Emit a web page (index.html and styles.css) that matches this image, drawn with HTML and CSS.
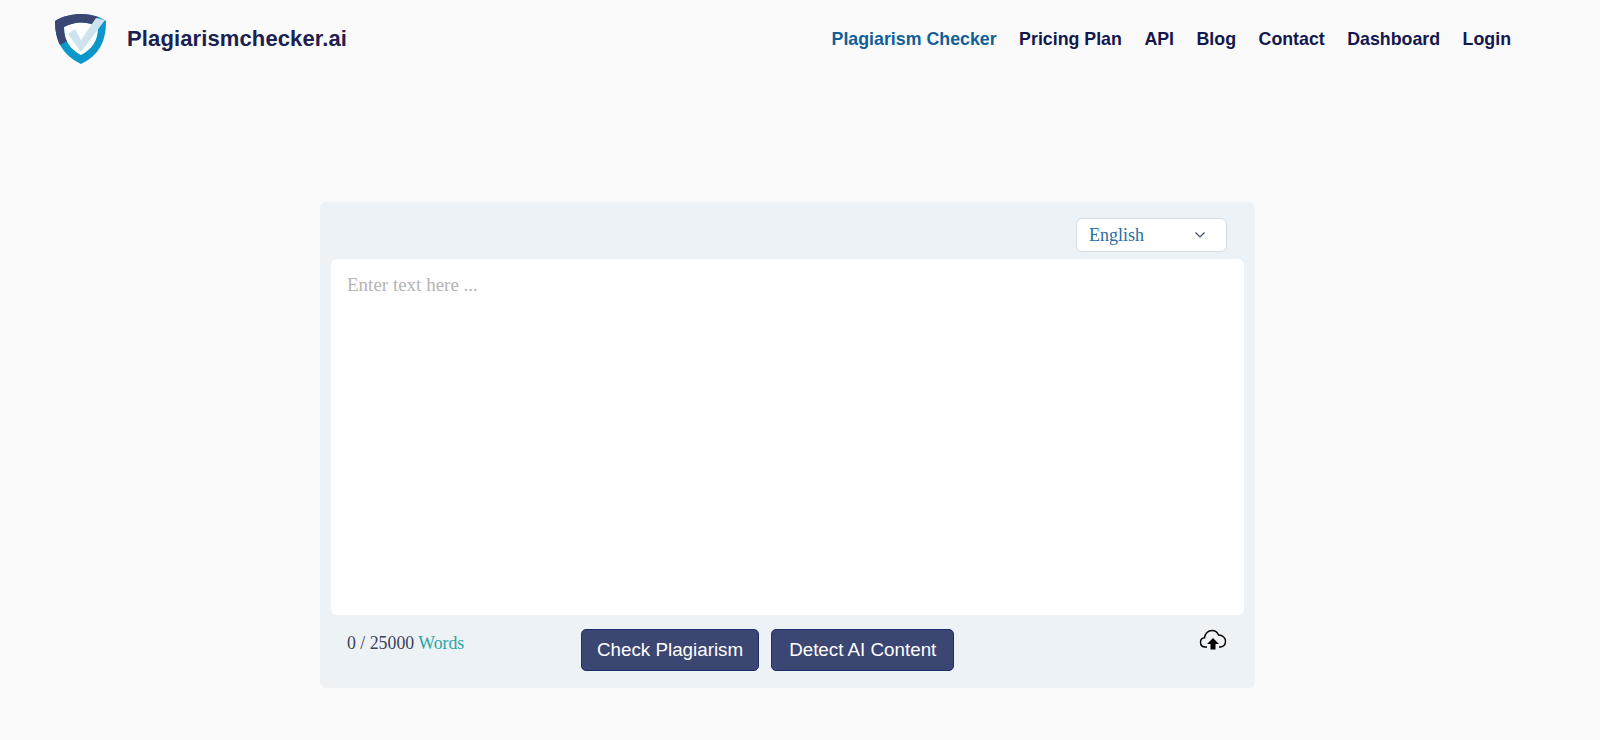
FILE: index.html
```html
<!DOCTYPE html>
<html lang="en">
<head>
  <meta charset="UTF-8">
  <title>Plagiarismchecker.ai</title>
  <link rel="stylesheet" href="styles.css">
</head>
<body>
  <header class="topbar">
    <a class="brand" href="#">
      <svg class="brand-logo" width="52" height="50" viewBox="0 0 52 50">
        <path d="M0 7C8 2 17 0 26 0C35 0 44 2 51 7C51 28 44 41 26 50C8 41 0 28 0 7Z" fill="#0b97c9"/>
        <path d="M9 13C15 10 20 8.5 26 8.5C32 8.5 37 10 43 13C43 27 37 35 26 41C15 35 9 27 9 13Z" fill="#fff"/>
        <path d="M0 7C8 2 17 0 26 0C32 0 38 1 43 3L38 10C34 9 30 8.5 26 8.5C20 8.5 15 10 9 13C9 19 10 24 12 27L5 31C2 25 0 17 0 7Z" fill="#3c4672"/>
        <path d="M13 20L20 15L26 26L41 4L50 6L26 38Z" fill="#cfe3ef"/>
      </svg>
      <span class="brand-name">Plagiarismchecker.ai</span>
    </a>
    <nav class="nav">
      <a class="nav-link active" href="#">Plagiarism Checker</a>
      <a class="nav-link" href="#">Pricing Plan</a>
      <a class="nav-link" href="#">API</a>
      <a class="nav-link" href="#">Blog</a>
      <a class="nav-link" href="#">Contact</a>
      <a class="nav-link" href="#">Dashboard</a>
      <a class="nav-link" href="#">Login</a>
    </nav>
  </header>

  <main class="checker">
    <div class="checker-top">
      <div class="lang-select">
        <span>English</span>
        <svg width="12" height="8" viewBox="0 0 12 8"><path d="M1.5 1.5L6 6L10.5 1.5" fill="none" stroke="#3c4672" stroke-width="1.2"/></svg>
      </div>
    </div>
    <div class="text-box">Enter text here ...</div>
    <div class="checker-bottom">
      <div class="count">0 / 25000 <span class="count-label">Words</span></div>
      <div class="actions">
        <button class="btn">Check Plagiarism</button>
        <button class="btn btn-ai">Detect AI Content</button>
      </div>
      <svg class="upload" width="28" height="22" viewBox="0 0 28 22">
        <path d="M8 18H6.5C3.5 18 1.5 16 1.5 13.2C1.5 10.8 3.2 9 5.6 8.8C6 4.6 9 1.5 13 1.5C16 1.5 18.4 3.2 19.5 6C23.4 5.8 26.5 8.6 26.5 12.3C26.5 15.6 24.4 17.7 21.5 18H20" fill="none" stroke="#000" stroke-width="1.4"/>
        <path d="M14 9L20 15H16.5V20.5H11.5V15H8Z" fill="#000"/>
      </svg>
    </div>
  </main>
</body>
</html>
```

FILE: styles.css
```css
body {
  margin: 0;
  background: #fafafa;
  font-family: "Liberation Serif", serif;
}

.topbar {
  display: flex;
  justify-content: space-between;
  align-items: center;
  height: 78px;
  padding: 0 89px 0 55px;
}

.brand {
  display: flex;
  align-items: center;
  gap: 20px;
  text-decoration: none;
}

.brand-name {
  color: #1c2150;
  font-family: "Liberation Sans", sans-serif;
  font-size: 22px;
  font-weight: bold;
  letter-spacing: 0.12px;
}

.nav {
  display: flex;
  gap: 22.5px;
}

.nav-link {
  color: #12174f;
  font-family: "Liberation Sans", sans-serif;
  font-size: 17.8px;
  font-weight: bold;
  text-decoration: none;
}

.nav-link.active {
  color: #115f97;
}

.checker {
  width: 935px;
  height: 486px;
  margin: 124px 0 0 320px;
  background: #edf2f7;
  border-radius: 6px;
  box-sizing: border-box;
  padding: 16px 11px 0 11px;
}

.checker-top {
  display: flex;
  justify-content: flex-end;
  padding-right: 17px;
  height: 41px;
}

.lang-select {
  display: flex;
  justify-content: space-between;
  align-items: center;
  width: 151px;
  height: 34px;
  box-sizing: border-box;
  padding: 0 20px 0 12px;
  background: #fff;
  border: 1px solid #d8dce0;
  border-radius: 6px;
  color: #2a6ea6;
  font-size: 18px;
}

.text-box {
  height: 356px;
  box-sizing: border-box;
  padding: 15px 16px;
  background: #fff;
  border-radius: 6px;
  color: #b5b5b5;
  font-size: 19px;
}

.checker-bottom {
  display: flex;
  align-items: flex-start;
  padding: 14px 17px 0 16px;
}

.count {
  width: 234px;
  padding-top: 4px;
  color: #3d4456;
  font-size: 17.8px;
}

.count-label {
  color: #2aa5a5;
}

.actions {
  display: flex;
  gap: 12px;
}

.btn {
  height: 42px;
  padding: 0 15px;
  background: #3c4672;
  border: 1px solid #1f2f6e;
  border-radius: 5px;
  color: #fff;
  font-family: "Liberation Sans", sans-serif;
  font-size: 18.8px;
}

.btn-ai {
  padding: 0 17px;
}

.upload {
  margin-left: auto;
}
```
